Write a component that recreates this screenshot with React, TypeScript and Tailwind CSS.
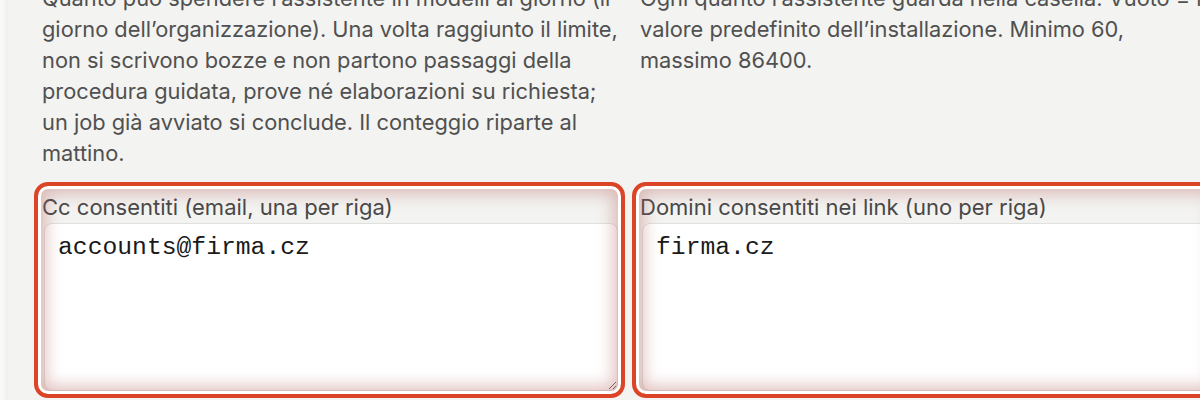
import React from 'react';

const fields = [
  {
    help: 'Quanto può spendere l’assistente in modelli al giorno (il giorno dell’organizzazione). Una volta raggiunto il limite, non si scrivono bozze e non partono passaggi della procedura guidata, prove né elaborazioni su richiesta; un job già avviato si conclude. Il conteggio riparte al mattino.',
    label: 'Cc consentiti (email, una per riga)',
    value: 'accounts@firma.cz',
  },
  {
    help: 'Ogni quanto l’assistente guarda nella casella. Vuoto = il valore predefinito dell’installazione. Minimo 60, massimo 86400.',
    label: 'Domini consentiti nei link (uno per riga)',
    value: 'firma.cz',
  },
];

function Field({ label, value }: { label: string; value: string }) {
  return (
    <div className="relative flex flex-col pt-[1px]">
      <label className="text-[22px] leading-[27px] text-[#484848]">{label}</label>
      <textarea
        defaultValue={value}
        className="mt-[2px] ml-[2px] mr-[4px] h-[168px] rounded-[8px] border border-[#e0e0de] bg-white px-[13px] py-[8px] font-['Liberation_Mono',monospace] text-[24.7px] leading-[30px] text-[#1a1a1a] outline-none"
      />
      {/* highlight ring drawn over the field */}
      <div className="pointer-events-none absolute -top-[11px] -left-[8px] -right-[3px] -bottom-[7px] rounded-[14px] border-4 border-[#dc4428] shadow-[inset_0_0_0_3px_#ffffff,inset_0_0_16px_8px_rgba(180,100,95,0.4)]" />
    </div>
  );
}

export default function App() {
  return (
    <div className="h-[400px] w-[1200px] overflow-hidden bg-[#f9f9f8] font-['Inter',sans-serif]">
      <div className="ml-[8px] h-[440px] bg-[#f3f3f1] pl-[34px] shadow-[-2px_0_6px_rgba(0,0,0,0.06)]">
        <div className="-mt-[17px] grid w-[1180px] grid-cols-[580px_580px] gap-x-[18px] gap-y-[24px]">
          {fields.map((f) => (
            <p key={f.label} className="text-[21.8px] leading-[31px] text-[#505050]">
              {f.help}
            </p>
          ))}
          {fields.map((f) => (
            <Field key={f.label} label={f.label} value={f.value} />
          ))}
        </div>
      </div>
    </div>
  );
}
